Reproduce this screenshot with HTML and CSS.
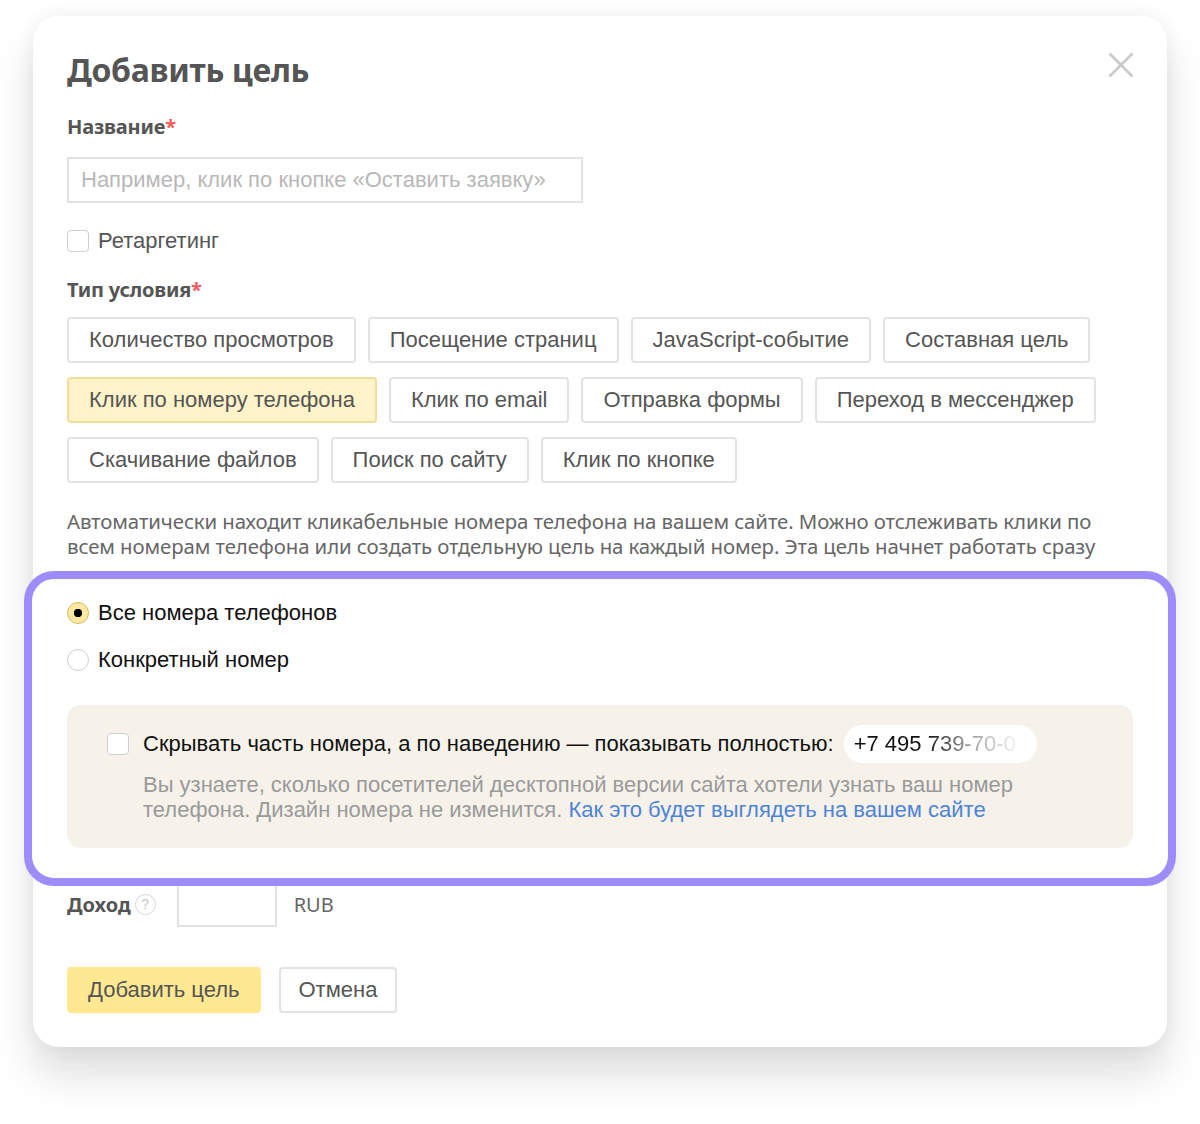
FILE: index.html
```html
<!DOCTYPE html>
<html lang="ru">
<head>
	<meta charset="utf-8">
	<title>Добавить цель</title>
	<link rel="stylesheet" href="styles.css">
</head>
<body>
	<div class="modal">
		<div class="modal-head">
			<h1 class="title">Добавить цель</h1>
			<button class="close" aria-label="Закрыть">
				<svg width="26" height="26" viewBox="0 0 26 26"><path d="M1.5 1.5l23 23M24.5 1.5l-23 23" stroke="#c9c9c9" stroke-width="2.6" fill="none"/></svg>
			</button>
		</div>

		<label class="field-label" for="goal_name">Название<span class="req">*</span></label>
		<input class="text-input" type="text" id="goal_name" placeholder="Например, клик по кнопке «Оставить заявку»">

		<label class="check-row">
			<input type="checkbox" class="check">
			<span>Ретаргетинг</span>
		</label>

		<div class="field-label">Тип условия<span class="req">*</span></div>
		<div class="chips">
			<div class="chip-row">
				<button class="chip">Количество просмотров</button>
				<button class="chip">Посещение страниц</button>
				<button class="chip">JavaScript-событие</button>
				<button class="chip">Составная цель</button>
			</div>
			<div class="chip-row">
				<button class="chip chip-active">Клик по номеру телефона</button>
				<button class="chip">Клик по email</button>
				<button class="chip">Отправка формы</button>
				<button class="chip">Переход в мессенджер</button>
			</div>
			<div class="chip-row">
				<button class="chip">Скачивание файлов</button>
				<button class="chip">Поиск по сайту</button>
				<button class="chip">Клик по кнопке</button>
			</div>
		</div>

		<p class="hint">Автоматически находит кликабельные номера телефона на вашем сайте. Можно отслеживать клики по всем номерам телефона или создать отдельную цель на каждый номер. Эта цель начнет работать сразу после добавления.</p>

		<div class="focus">
			<label class="radio-row">
				<input type="radio" name="phones" class="radio" checked>
				<span>Все номера телефонов</span>
			</label>
			<label class="radio-row">
				<input type="radio" name="phones" class="radio">
				<span>Конкретный номер</span>
			</label>

			<div class="mask-box">
				<div class="mask-line">
					<input type="checkbox" class="check">
					<span>Скрывать часть номера, а по наведению — показывать полностью:</span>
					<span class="phone"><span class="phone-text">+7 495 739-70-0</span></span>
				</div>
				<p class="mask-note">Вы узнаете, сколько посетителей десктопной версии сайта хотели узнать ваш номер телефона. Дизайн номера не изменится. <a href="#">Как это будет выглядеть на вашем сайте</a></p>
			</div>
		</div>

		<div class="income">
			<span class="income-label">Доход</span>
			<span class="help">?</span>
			<input class="income-input" type="text">
			<span class="currency">RUB</span>
		</div>

		<div class="actions">
			<button class="btn btn-primary">Добавить цель</button>
			<button class="btn">Отмена</button>
		</div>
	</div>
</body>
</html>
```

FILE: styles.css
```css
*, *:before, *:after {
	box-sizing: border-box;
}

body {
	margin: 0;
	padding-bottom: 60px;
	background: #fff;
	font-family: "Liberation Sans", Arial, sans-serif;
	color: #555;
}

.modal {
	width: 1134px;
	margin: 16px 0 0 33px;
	padding: 34px 34px 34px;
	background: #fff;
	border-radius: 26px;
	box-shadow: 0 28px 40px rgba(0,0,0,0.13), 0 0 20px rgba(0,0,0,0.06);
}

.modal-head {
	display: flex;
	justify-content: space-between;
	align-items: flex-start;
}

.title {
	margin: 0;
	font-family: "Noto Sans", sans-serif;
	font-weight: 700;
	font-size: 32px;
	line-height: 40px;
	color: #555;
	letter-spacing: -0.3px;
}

.close {
	margin: 2px -1px 0 0;
	padding: 0;
	border: 0;
	background: none;
	width: 26px;
	height: 26px;
}

.field-label {
	display: block;
	margin-top: 24px;
	font-family: "Noto Sans", sans-serif;
	font-weight: 700;
	font-size: 20px;
	line-height: 26px;
	color: #555;
	letter-spacing: -0.2px;
}

.req {
	color: #f45c5c;
}

.text-input {
	display: block;
	width: 516px;
	height: 46px;
	margin-top: 17px;
	padding: 0 12px;
	border: 2px solid #e2e2e2;
	font-family: "Liberation Sans", Arial, sans-serif;
	font-size: 22px;
	color: #333;
	outline: 0;
}

.text-input::placeholder {
	color: #b8b8b8;
}

.check-row {
	display: flex;
	align-items: center;
	gap: 9px;
	margin-top: 26px;
	font-size: 22px;
	line-height: 24px;
	color: #555;
}

.check {
	appearance: none;
	-webkit-appearance: none;
	flex: none;
	width: 22px;
	height: 22px;
	margin: 0;
	border: 1.5px solid #cfcfcf;
	border-radius: 4px;
	background: #fff;
}

.chips {
	display: flex;
	flex-direction: column;
	gap: 14px;
	margin-top: 14px;
}

.chip-row {
	display: flex;
	gap: 12px;
}

.chip {
	height: 46px;
	padding: 0 20px;
	border: 2px solid #e3e3e3;
	border-radius: 4px;
	background: #fff;
	font-family: "Liberation Sans", Arial, sans-serif;
	font-size: 22px;
	color: #555;
}

.chip-active {
	background: #fff3c9;
	border-color: #f0dd9c;
}

.hint {
	margin: 26px 0 0;
	max-height: 53px;
	overflow: hidden;
	font-family: "Noto Sans", sans-serif;
	font-size: 20.4px;
	line-height: 25px;
	color: #666;
	letter-spacing: -0.1px;
}

.focus {
	position: relative;
	margin: 9px -43px 0;
	padding: 22px 35px 30px;
	border: 8px solid #9e8cfb;
	border-radius: 30px;
	background: #fff;
}

.radio-row {
	display: flex;
	align-items: center;
	gap: 9px;
	height: 24px;
	font-size: 22px;
	color: #111;
}

.radio-row + .radio-row {
	margin-top: 23px;
}

.radio {
	appearance: none;
	-webkit-appearance: none;
	flex: none;
	width: 22px;
	height: 22px;
	margin: 0;
	border: 1.5px solid #d0d0d0;
	border-radius: 50%;
	background: #fff;
}

.radio:checked {
	border-color: #d6b85c;
	background: radial-gradient(circle, #000 0 4px, #ffe9a3 4.5px);
}

.mask-box {
	margin-top: 33px;
	padding: 20px 40px 26px;
	background: #f6f2ea;
	border-radius: 14px;
}

.mask-line {
	display: flex;
	align-items: center;
	gap: 14px;
	height: 38px;
	font-size: 22px;
	color: #111;
}

.phone {
	margin-left: -4px;
	height: 38px;
	width: 193px;
	padding: 0 10px;
	border-radius: 19px;
	background: #fff;
	display: flex;
	align-items: center;
	overflow: hidden;
	white-space: nowrap;
}

.phone-text {
	background: linear-gradient(90deg, #111 45%, #999 70%, #f0f0f0 100%);
	-webkit-background-clip: text;
	background-clip: text;
	color: transparent;
}

.mask-note {
	margin: 9px 0 0 36px;
	font-size: 22px;
	line-height: 25px;
	color: #9a9a9a;
}

.mask-note a {
	color: #4d84d6;
	text-decoration: none;
}

.income {
	display: flex;
	align-items: center;
	margin-top: -5px;
}

.income-label {
	font-family: "Noto Sans", sans-serif;
	font-weight: 700;
	font-size: 20px;
	color: #555;
	letter-spacing: 0;
}

.help {
	width: 21px;
	height: 21px;
	margin-left: 4px;
	border: 1.5px solid #d6d6d6;
	border-radius: 50%;
	font-size: 14px;
	line-height: 18px;
	text-align: center;
	color: #c8c8c8;
}

.income-input {
	width: 100px;
	height: 46px;
	margin-left: 21px;
	border: 2px solid #e2e2e2;
	outline: 0;
}

.currency {
	margin-left: 17px;
	font-family: "Noto Sans", sans-serif;
	font-size: 20px;
	color: #666;
}

.actions {
	display: flex;
	gap: 18px;
	margin-top: 40px;
}

.btn {
	height: 46px;
	padding: 0 18px;
	border: 2px solid #e3e3e3;
	border-radius: 4px;
	background: #fff;
	font-family: "Liberation Sans", Arial, sans-serif;
	font-size: 22px;
	color: #555;
}

.btn-primary {
	padding: 0 19px;
	border-color: #ffe892;
	background: #ffe892;
}
```
